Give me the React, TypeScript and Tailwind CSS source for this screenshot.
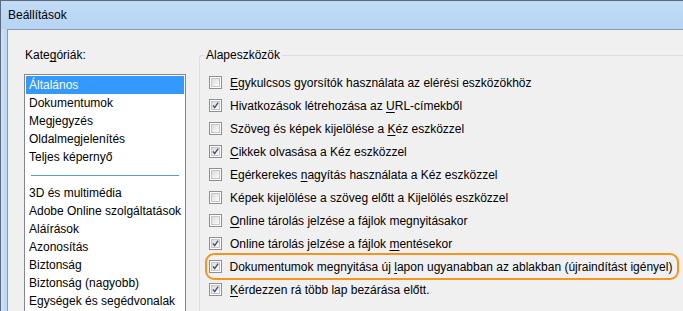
import React from "react";

const categoriesTop = [
  "Általános",
  "Dokumentumok",
  "Megjegyzés",
  "Oldalmegjelenítés",
  "Teljes képernyő",
];

const categoriesBottom = [
  "3D és multimédia",
  "Adobe Online szolgáltatások",
  "Aláírások",
  "Azonosítás",
  "Biztonság",
  "Biztonság (nagyobb)",
  "Egységek és segédvonalak",
];

// [before, underlined letter, after, checked]
const options: [string, string, string, boolean][] = [
  ["", "E", "gykulcsos gyorsítók használata az elérési eszközökhöz", false],
  ["Hivatkozások létrehozása az ", "U", "RL-címekből", true],
  ["Szöveg és képek kijelölése a ", "K", "éz eszközzel", false],
  ["", "C", "ikkek olvasása a Kéz eszközzel", true],
  ["Egérkerekes ", "n", "agyítás használata a Kéz eszközzel", false],
  ["Képek kijelölése a szöveg előtt a Kijelölés eszközzel", "", "", false],
  ["", "O", "nline tárolás jelzése a fájlok megnyitásakor", false],
  ["Online tárolás jelzése a fájlok ", "m", "entésekor", true],
  ["Dokumentumok megnyitása új ", "l", "apon ugyanabban az ablakban (újraindítást igényel)", true],
  ["", "K", "érdezzen rá több lap bezárása előtt.", true],
];

const Checkbox = ({ checked }: { checked: boolean }) => (
  <div className="w-[13px] h-[13px] shrink-0 border border-[#8f8f8f] bg-white p-[1px]">
    <div className="w-full h-full border border-[#c6c6c6] bg-gradient-to-br from-[#dcdcdc] to-[#fbfbfb] flex items-center justify-center">
      {checked && (
        <svg width="9" height="9" viewBox="0 0 9 9">
          <path d="M1.3 4.3 L3.4 7.2 L7.9 0.8" fill="none" stroke="#3c4f7a" strokeWidth="1.8" />
        </svg>
      )}
    </div>
  </div>
);

const OptionRow = ({ opt, highlight }: { opt: [string, string, string, boolean]; highlight?: boolean }) => {
  const [before, key, after, checked] = opt;
  const content = (
    <div className="flex items-center h-[23px] gap-[8px]">
      <Checkbox checked={checked} />
      <span className="whitespace-nowrap">
        {before}
        {key && <span className="underline underline-offset-2">{key}</span>}
        {after}
      </span>
    </div>
  );
  if (!highlight) return <div className="pl-[9px]">{content}</div>;
  return (
    <div className="ml-[5px] mr-[4px] pl-[1.5px] border-[2.5px] border-[#f7941e] rounded-[9px] -my-[2px]">
      {content}
    </div>
  );
};

export default function App() {
  return (
    <div
      className="w-[683px] h-[311px] overflow-hidden flex flex-col bg-[#c4dcf4] border-t border-l border-[#5a6b80] text-[12px] text-black"
      style={{ fontFamily: '"Liberation Sans", Arial, sans-serif' }}
    >
      {/* title bar */}
      <div className="h-[28px] shrink-0 flex items-center pl-[7px] bg-gradient-to-b from-[#c2dcf6] to-[#b6d4f4]">
        <span className="text-[12px]">Beállítások</span>
      </div>
      <div className="flex flex-1 min-h-0">
        <div className="w-[6px] shrink-0 bg-gradient-to-r from-[#cfe2f6] to-[#bcd6f1]" />
        <div className="flex-1 bg-[#f0f0f0] border-t border-l border-[#8c9aab] flex pl-[16px] pt-[15px]">
          {/* categories */}
          <div className="w-[162px] shrink-0 flex flex-col">
            <div className="h-[20px] leading-[20px] pl-[1px]">
              Kate<span className="underline underline-offset-2">g</span>óriák:
            </div>
            <div className="mt-[9px] flex-1 bg-white border border-[#828790] border-b-0 pt-[1px] px-[1px] whitespace-nowrap overflow-hidden">
              {categoriesTop.map((c, i) => (
                <div
                  key={c}
                  className={`h-[18px] leading-[18px] pl-[3px] ${i === 0 ? "bg-[#3399ff] text-white" : ""}`}
                >
                  {c}
                </div>
              ))}
              <div className="h-[18px] flex items-center px-[5px]">
                <div className="h-px w-full bg-[#5b9bd5]" />
              </div>
              {categoriesBottom.map((c) => (
                <div key={c} className="h-[18px] leading-[18px] pl-[3px]">
                  {c}
                </div>
              ))}
            </div>
          </div>
          {/* group box */}
          <fieldset className="ml-[13px] flex-1 border border-r-0 border-b-0 border-[#d5dfe5] rounded-tl-[3px] mt-[2px] min-w-0">
            <legend className="ml-[4px] px-[2px] leading-[16px]">Alapeszközök</legend>
            <div className="pt-[8px] flex flex-col">
              {options.map((o, i) => (
                <OptionRow key={i} opt={o} highlight={i === 8} />
              ))}
            </div>
          </fieldset>
        </div>
      </div>
    </div>
  );
}
